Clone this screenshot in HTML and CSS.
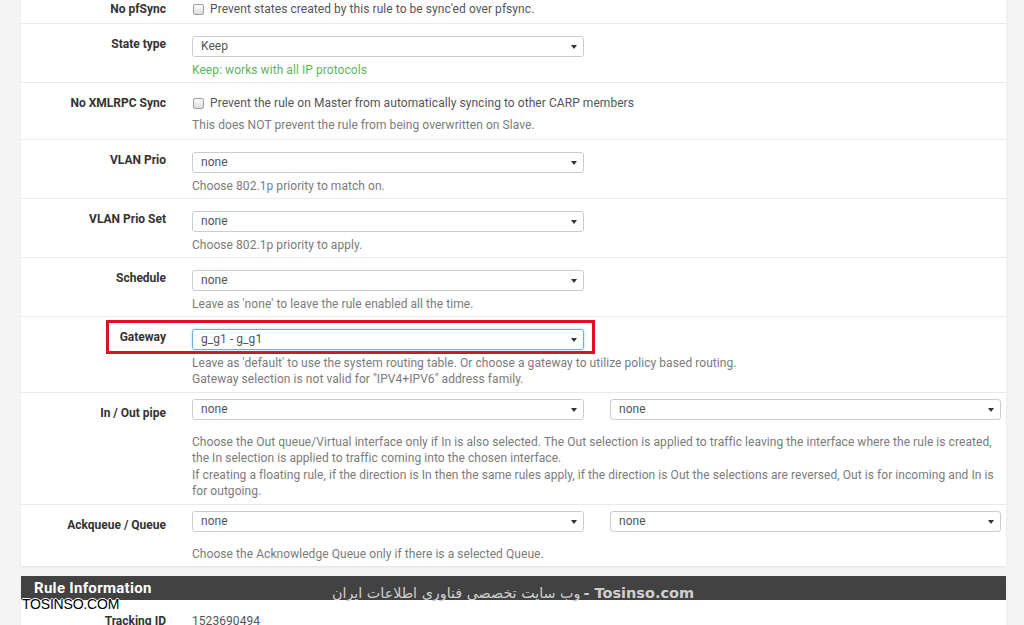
FILE: index.html
```html
<!DOCTYPE html>
<html>
<head>
  <meta charset="utf-8">
  <link rel="stylesheet" href="styles.css">
</head>
<body>
  <div class="page">
    <div class="panel panel-form">

      <div class="form-row row-check row-top">
        <div class="form-label">No pfSync</div>
        <div class="form-field">
          <div class="check-line"><span class="checkbox"></span>Prevent states created by this rule to be sync'ed over pfsync.</div>
        </div>
      </div>

      <div class="form-row">
        <div class="form-label">State type</div>
        <div class="form-field">
          <div class="select"><span>Keep</span></div>
          <div class="help help-ok">Keep: works with all IP protocols</div>
        </div>
      </div>

      <div class="form-row row-check">
        <div class="form-label">No XMLRPC Sync</div>
        <div class="form-field">
          <div class="check-line"><span class="checkbox"></span>Prevent the rule on Master from automatically syncing to other CARP members</div>
          <div class="help">This does NOT prevent the rule from being overwritten on Slave.</div>
        </div>
      </div>

      <div class="form-row">
        <div class="form-label">VLAN Prio</div>
        <div class="form-field">
          <div class="select"><span>none</span></div>
          <div class="help">Choose 802.1p priority to match on.</div>
        </div>
      </div>

      <div class="form-row">
        <div class="form-label">VLAN Prio Set</div>
        <div class="form-field">
          <div class="select"><span>none</span></div>
          <div class="help">Choose 802.1p priority to apply.</div>
        </div>
      </div>

      <div class="form-row">
        <div class="form-label">Schedule</div>
        <div class="form-field">
          <div class="select"><span>none</span></div>
          <div class="help">Leave as 'none' to leave the rule enabled all the time.</div>
        </div>
      </div>

      <div class="form-row row-marked">
        <div class="mark-box"></div>
        <div class="form-label">Gateway</div>
        <div class="form-field">
          <div class="select select-focus"><span>g_g1 - g_g1</span></div>
          <div class="help">Leave as 'default' to use the system routing table. Or choose a gateway to utilize policy based routing.<br>Gateway selection is not valid for "IPV4+IPV6" address family.</div>
        </div>
      </div>

      <div class="form-row">
        <div class="form-label">In / Out pipe</div>
        <div class="form-field">
          <div class="select-pair">
            <div class="select"><span>none</span></div>
            <div class="select"><span>none</span></div>
          </div>
          <div class="help help-wide">Choose the Out queue/Virtual interface only if In is also selected. The Out selection is applied to traffic leaving the interface where the rule is created,<br>the In selection is applied to traffic coming into the chosen interface.<br>If creating a floating rule, if the direction is In then the same rules apply, if the direction is Out the selections are reversed, Out is for incoming and In is<br>for outgoing.</div>
        </div>
      </div>

      <div class="form-row">
        <div class="form-label">Ackqueue / Queue</div>
        <div class="form-field">
          <div class="select-pair">
            <div class="select"><span>none</span></div>
            <div class="select"><span>none</span></div>
          </div>
          <div class="help help-wide">Choose the Acknowledge Queue only if there is a selected Queue.</div>
        </div>
      </div>

    </div>

    <div class="panel">
      <div class="panel-heading">Rule Information</div>
      <div class="form-row row-info">
        <div class="form-label">Tracking ID</div>
        <div class="form-field"><div class="value">1523690494</div></div>
      </div>
    </div>
  </div>

  <div class="wm-site"><span class="wm-fa">وب سایت تخصصی فناوری اطلاعات ایران</span> <span class="wm-en">- Tosinso.com</span></div>
  <div class="wm-logo">TOSINSO.COM</div>
</body>
</html>
```

FILE: styles.css
```css
* {
  margin: 0;
  padding: 0;
  box-sizing: border-box;
}

body {
  width: 1024px;
  height: 625px;
  background: #f5f4f5;
  color: #333333;
  font-family: Roboto, 'Noto Sans', sans-serif;
  font-size: 12px;
  letter-spacing: 0.06px;
  overflow: hidden;
  position: relative;
}

.page {
  padding-left: 21px;
  width: 1006px;
  margin-top: -12px;
}

.panel {
  background: #ffffff;
  box-shadow: 0 1px 2px rgba(0, 0, 0, 0.08);
  margin-bottom: 10px;
}

.form-row {
  display: flex;
  border-top: 1px solid #e9e9e9;
  padding: 12px 0 4px;
  position: relative;
}

.row-check {
  padding-bottom: 6px;
}

.row-top {
  border-top: none;
  padding-top: 13px;
  padding-bottom: 5px;
}

.form-label {
  width: 171px;
  flex-shrink: 0;
  padding-right: 26px;
  text-align: right;
  font-weight: 700;
  line-height: 17px;
  color: #333333;
  letter-spacing: 0;
}

.form-field {
  flex: 1;
  padding-right: 5px;
}

.check-line {
  display: flex;
  align-items: center;
  line-height: 17px;
  color: #555555;
}

.checkbox {
  width: 11px;
  height: 11px;
  margin: 0 6px 0 1px;
  border: 1px solid #a0a0a0;
  border-radius: 2px;
  background: linear-gradient(#fdfdfd, #dcdcdc);
}

.select {
  width: 392px;
  height: 21px;
  border: 1px solid #cccccc;
  border-radius: 3px;
  background: #ffffff;
  color: #555555;
  line-height: 19px;
  padding-left: 8px;
  position: relative;
}

.select::after {
  content: "";
  position: absolute;
  right: 6px;
  top: 8px;
  border-left: 3px solid transparent;
  border-right: 3px solid transparent;
  border-top: 4px solid #333333;
}

.select-focus {
  border-color: #66afe9;
  box-shadow: 0 0 3px rgba(102, 175, 233, 0.5);
}

.select-pair {
  display: flex;
  gap: 26px;
  margin-top: -6px;
}

.select-pair .select:last-child {
  width: 391px;
}

.help {
  margin-top: 4.5px;
  line-height: 16.5px;
  color: #7b7b7b;
  white-space: nowrap;
}

.help-ok {
  color: #5cb85c;
}

.help-wide {
  margin-top: 14px;
}

.mark-box {
  position: absolute;
  left: 85px;
  top: 3px;
  width: 489px;
  height: 34px;
  border: 3px solid #d91324;
}

.panel-heading {
  background: #424242;
  color: #ffffff;
  font-size: 15px;
  font-weight: 700;
  height: 24px;
  line-height: 24px;
  padding-left: 13px;
  letter-spacing: 0.3px;
}

.row-info {
  border-top: none;
  padding-top: 13px;
}

.value {
  color: #555555;
  line-height: 17px;
}

.wm-site {
  position: absolute;
  left: 332px;
  top: 585px;
  color: #cfcfcf;
  white-space: nowrap;
  direction: ltr;
  letter-spacing: 0;
}

.wm-fa {
  font-family: 'DejaVu Sans', sans-serif;
  font-size: 14.3px;
}

.wm-en {
  font-family: 'DejaVu Sans', sans-serif;
  font-size: 14.5px;
  font-weight: 700;
}

.wm-logo {
  position: absolute;
  left: 22px;
  top: 596px;
  font-family: 'Liberation Sans', Arial, sans-serif;
  font-size: 14px;
  color: #000000;
  letter-spacing: -0.2px;
  text-shadow: -1px 0 #fff, 1px 0 #fff, 0 -1px #fff, 0 1px #fff;
}
```
